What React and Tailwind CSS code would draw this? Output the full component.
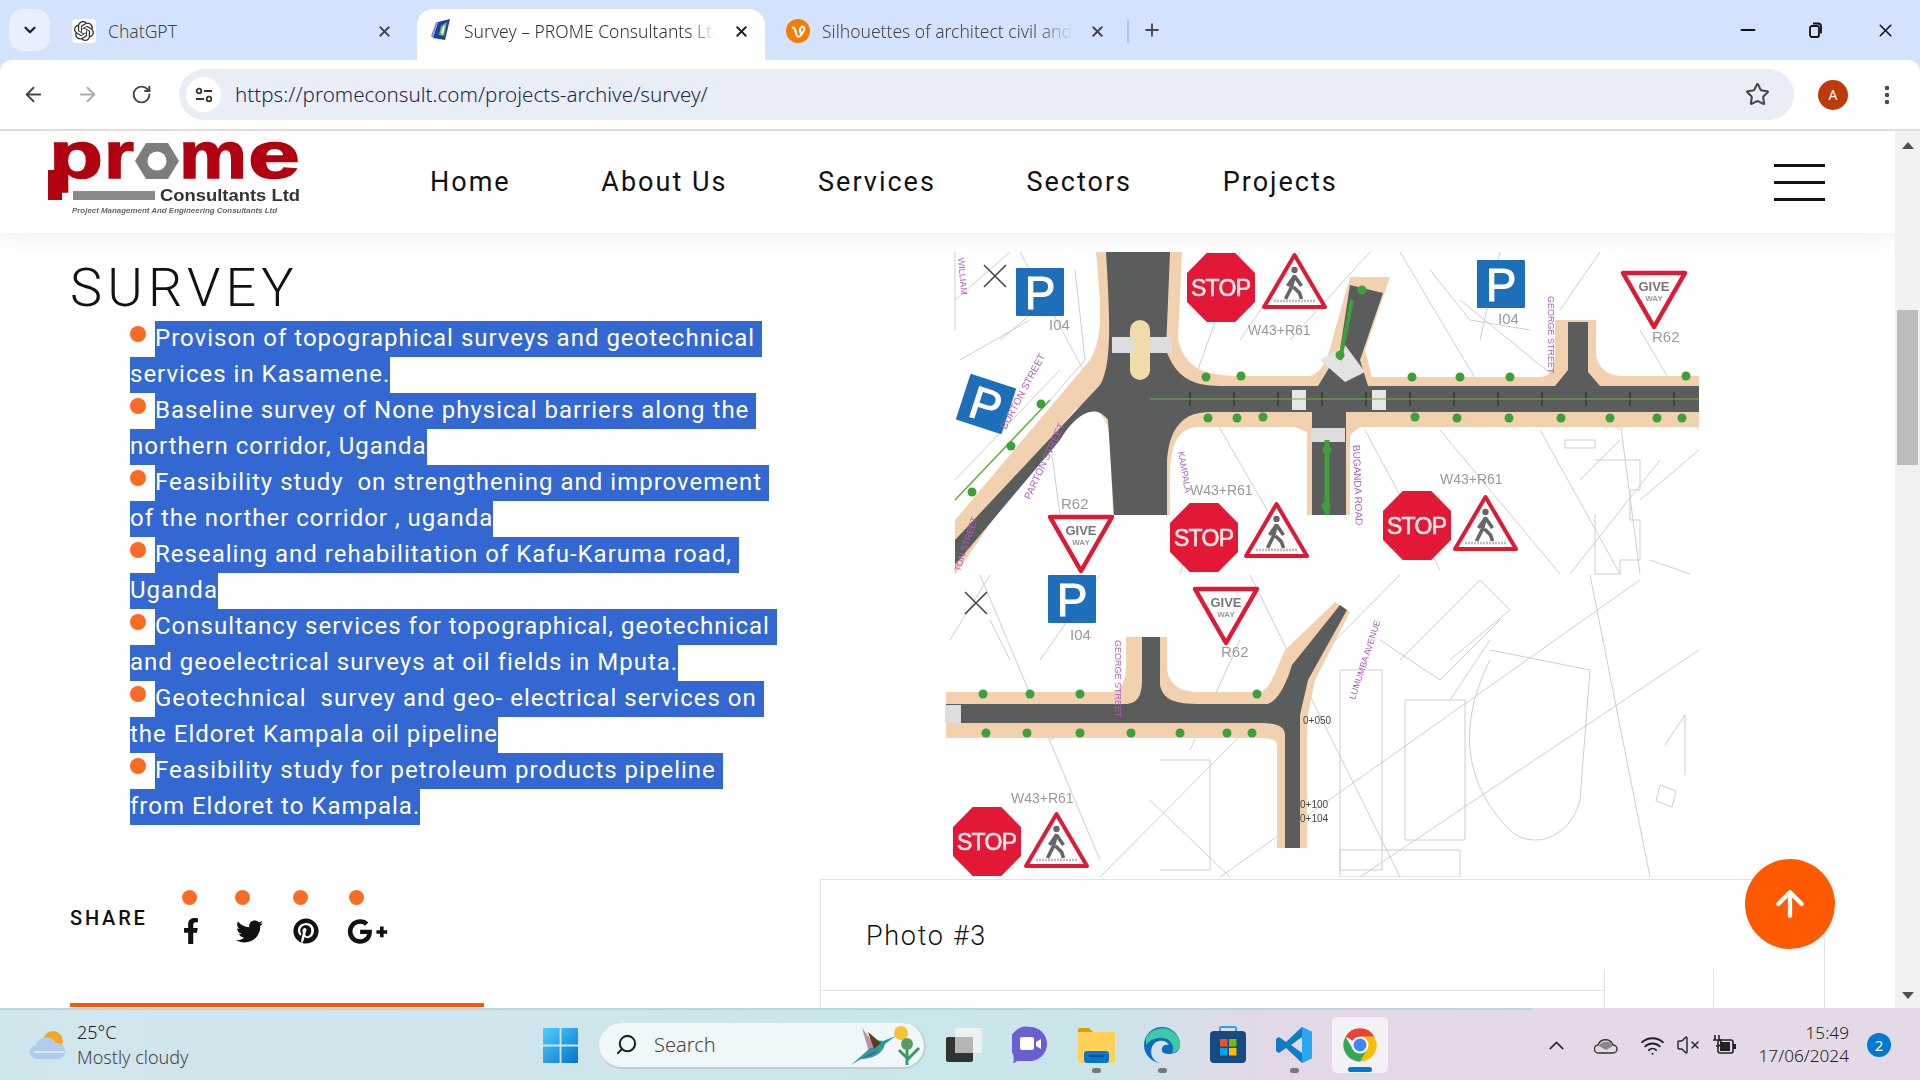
import React from "react";
import { FaFacebookF, FaTwitter, FaPinterest, FaGooglePlusG } from "react-icons/fa";
import { SiOpenai } from "react-icons/si";
import { ArrowLeft, ArrowRight, RotateCw, Star, Plus, X, ChevronDown, ChevronUp, Search, ArrowUp, EllipsisVertical, Minus, VolumeX, Wifi } from "lucide-react";

const lines = [
  ["Provison of topographical surveys and geotechnical ", "services in Kasamene."],
  ["Baseline survey of None physical barriers along the ", "northern corridor, Uganda"],
  ["Feasibility study  on strengthening and improvement ", "of the norther corridor , uganda"],
  ["Resealing and rehabilitation of Kafu-Karuma road, ", "Uganda"],
  ["Consultancy services for topographical, geotechnical ", "and geoelectrical surveys at oil fields in Mputa."],
  ["Geotechnical  survey and geo- electrical services on ", "the Eldoret Kampala oil pipeline"],
  ["Feasibility study for petroleum products pipeline ", "from Eldoret to Kampala."],
];

function Stop({ x, y, w = 68, h = 69 }) {
  const a = w * 0.29, b = h * 0.29;
  const pts = [[a, 0], [w - a, 0], [w, b], [w, h - b], [w - a, h], [a, h], [0, h - b], [0, b]].map((p) => `${x + p[0]},${y + p[1]}`).join(" ");
  return (
    <g>
      <polygon points={pts} fill="#e31837" />
      <text x={x + w / 2} y={y + h / 2 + 8} textAnchor="middle" fill="#fbe6e8" fontFamily="Liberation Sans" fontWeight="400" stroke="#fbe6e8" strokeWidth="0.6" fontSize="23" textLength={w - 8} lengthAdjust="spacing">STOP</text>
    </g>
  );
}
function Ped({ x, y, w = 65, h = 56 }) {
  const cx = x + w / 2;
  return (
    <g>
      <polygon points={`${cx},${y + 2} ${x + w - 2},${y + h - 2} ${x + 2},${y + h - 2}`} fill="#fff" stroke="#dc1c35" strokeWidth="4" strokeLinejoin="round" />
      <circle cx={cx} cy={y + 17} r="3.2" fill="#666" />
      <path d={`M${cx} ${y + 22} L${cx - 3} ${y + 34} L${cx - 9} ${y + 46} M${cx - 1} ${y + 34} L${cx + 5} ${y + 40} L${cx + 7} ${y + 46} M${cx} ${y + 23} L${cx - 7} ${y + 33} M${cx} ${y + 23} L${cx + 7} ${y + 33}`} stroke="#666" strokeWidth="3.6" fill="none" />
      <line x1={x + 12} x2={x + w - 12} y1={y + h - 8} y2={y + h - 8} stroke="#bbb" strokeWidth="2.5" strokeDasharray="2 1" />
    </g>
  );
}
function Give({ x, y, w = 66, h = 58 }) {
  const cx = x + w / 2;
  return (
    <g>
      <polygon points={`${x + 2},${y + 2} ${x + w - 2},${y + 2} ${cx},${y + h - 2}`} fill="#fff" stroke="#dc1c35" strokeWidth="4.5" strokeLinejoin="round" />
      <text x={cx} y={y + 20} textAnchor="middle" fill="#777" fontFamily="Liberation Sans" fontWeight="700" fontSize="13">GIVE</text>
      <text x={cx} y={y + 30} textAnchor="middle" fill="#999" fontFamily="Liberation Sans" fontWeight="700" fontSize="8">WAY</text>
    </g>
  );
}
function Park({ x, y, rot = 0 }) {
  return (
    <g transform={`rotate(${rot} ${x + 24} ${y + 24})`}>
      <rect x={x} y={y} width="48" height="48" rx="1" fill="#1c6fb8" />
      <text x={x + 24} y={y + 41} textAnchor="middle" fill="#fff" fontFamily="Liberation Sans" fontWeight="400" stroke="#fff" strokeWidth="1" fontSize="46">P</text>
    </g>
  );
}
function Dots({ pts }) {
  return pts.map((p, i) => <circle key={i} cx={p[0]} cy={p[1]} r="4.5" fill="#3f9f3a" />);
}
function Label({ x, y, t, rot, c = "#999", s = 13 }) {
  return <text x={x} y={y} fontSize={s} fill={c} fontFamily="Liberation Sans" transform={rot ? `rotate(${rot} ${x} ${y})` : undefined}>{t}</text>;
}
function Compass({ x, y }) {
  return <path d={`M${x - 11} ${y - 11}L${x + 11} ${y + 11}M${x + 11} ${y - 11}L${x - 11} ${y + 11}`} stroke="#444" strokeWidth="1.6" />;
}

const faint = [
  "M955 300L1010 252", "M1000 470L1100 380", "M955 480L1060 370", "M1020 252L1110 420", "M1240 252L1180 420", "M1400 252L1500 420", "M1370 252L1290 340",
  "M1460 300L1620 430", "M1500 252L1480 340", "M1600 252L1560 310", "M1640 330L1699 430", "M1440 430L1560 574", "M1540 430L1620 574", "M1640 500L1699 450",
  "M1620 420L1640 574", "M1660 460L1570 574", "M1215 420L1270 515", "M1365 430L1440 570", "M1200 515L1180 574", "M1050 440L1060 515", "M1650 560L1690 574",
  "M1565 440h30v8h-30z", "M1595 460h45v30h-10v30h10v40h-20v14h-25v-60", "M950 640L990 575", "M980 575L1100 860", "M1100 575L1040 660", "M1250 575L1400 877",
  "M1400 575L1100 877", "M1640 580L1220 877", "M1590 575L1650 877", "M1699 650L1360 877", "M1500 620L1440 680L1380 640", "M1490 640L1450 700", "M1340 670h42v200h-42z",
  "M1405 700h60v140h-60z", "M1490 660C1460 720 1460 780 1510 830C1530 850 1570 840 1580 800L1590 670L1490 650", "M1160 760h50v110h-50", "M1340 850h120v27h-120z", "M1665 745l20 -30v60", "M1660 785l16 6l-4 16l-16-6z",
  "M955 252V330", "M1075 270L1085 360L1050 400", "M1000 340L1060 290", "M960 360L1030 320", "M1430 270L1470 320L1530 330", "M1300 252L1240 340", "M1620 440L1580 480",
  "M1190 750L1240 640", "M1050 740L1120 700", "M990 620L1010 660", "M1150 800L1230 877", "M1400 660L1480 580L1510 610L1450 660",
];

const ticks = [];
for (let x = 1190; x < 1690; x += 44) ticks.push(`M${x} 392V406`);
for (let x = 975; x < 1270; x += 48) ticks.push(`M${x} 707V721`);

function MapDrawing() {
  return (
    <svg viewBox="945 252 755 625" width="755" height="625" className="block blur-[0.5px]">
      <rect x="945" y="252" width="755" height="625" fill="#fff" />
      {faint.map((d, i) => <path key={i} d={d} stroke="#c9d0d3" strokeWidth="1" fill="none" />)}
      <path d="M1096 252H1182L1178 340C1185 368 1205 376 1240 376H1310C1325 372 1330 350 1335 330L1350 277H1390L1365 350L1372 377H1540C1552 377 1555 365 1555 350V320H1596V355C1600 372 1610 376 1625 376H1699V427H1360L1350 435V515H1307V432L1295 427H1200C1180 427 1172 440 1170 470V515H1113L1110 440C1110 415 1090 400 1075 410C1040 450 1000 510 955 575V520L1090 360C1105 335 1100 300 1096 252Z" fill="#f2d1b0" />
      <path d="M1106 252H1170L1166 350C1175 375 1190 386 1220 386H1318L1340 350L1350 285L1383 293L1360 360L1368 386H1555L1568 370V322H1588V372L1600 386H1699V412H1346V515H1312V412H1210C1185 412 1170 425 1167 460V515H1114L1108 420C1095 402 1075 415 1060 440L955 565V540L1100 385C1112 365 1110 320 1106 252Z" fill="#5b5d5c" />
      {ticks.map((d, i) => <path key={i} d={d} stroke="#222" strokeWidth="1" />)}
      <rect x="1130" y="320" width="20" height="60" rx="10" fill="#efdca8" />
      <rect x="1112" y="337" width="22" height="16" fill="#ddd" />
      <rect x="1150" y="337" width="22" height="16" fill="#ddd" />
      <path d="M1320 360L1345 345L1365 372L1345 382Z" fill="#e3e3e3" />
      <rect x="1292" y="390" width="14" height="20" fill="#e6e6e6" />
      <rect x="1372" y="390" width="14" height="20" fill="#e6e6e6" />
      <rect x="1311" y="428" width="34" height="14" fill="#ddd" />
      <path d="M1150 399H1699" stroke="#7ea84a" strokeWidth="1" />
      <path d="M1352 300L1340 360" stroke="#3f9f3a" strokeWidth="4" />
      <path d="M1327 440V515" stroke="#3f9f3a" strokeWidth="5" />
      <path d="M955 500L1050 400" stroke="#5fb13c" strokeWidth="1.5" />
      <Dots pts={[[1206, 377], [1241, 376], [1412, 377], [1460, 377], [1510, 377], [1686, 376], [1208, 418], [1237, 418], [1263, 417], [1415, 417], [1457, 418], [1509, 418], [1561, 418], [1610, 418], [1657, 418], [1682, 418], [1041, 404], [1011, 446], [972, 492], [1340, 355], [1362, 290], [1327, 450], [1326, 506]]} />
      <path d="M946 692H1110C1122 692 1126 680 1126 665V637H1167V670C1170 685 1180 692 1200 692H1260C1270 690 1276 670 1285 650L1335 602L1350 612L1315 680L1307 720V848H1277V745C1277 740 1270 738 1260 738H946Z" fill="#f2d1b0" />
      <path d="M946 704H1125C1138 704 1142 695 1142 680V637H1160V685C1163 700 1175 704 1200 704H1268C1278 700 1286 685 1292 665L1340 605L1347 610L1308 680L1300 715V848H1285V735C1285 726 1276 723 1260 723H946Z" fill="#5b5d5c" />
      <rect x="945" y="705" width="16" height="18" fill="#ddd" />
      <Dots pts={[[983, 694], [1030, 694], [1080, 694], [1257, 694], [986, 733], [1027, 733], [1080, 733], [1131, 733], [1180, 733], [1227, 733], [1252, 733]]} />
      <Compass x={995} y={276} /><Compass x={976} y={603} />
      <Park x={1016} y={268} /><Park x={1477} y={260} /><Park x={962} y={380} rot={18} /><Park x={1048} y={575} />
      <Stop x={1187} y={253} /><Stop x={1170} y={503} /><Stop x={1383} y={491} /><Stop x={953} y={807} />
      <Ped x={1262} y={253} /><Ped x={1244} y={502} /><Ped x={1453} y={495} /><Ped x={1024} y={812} />
      <Give x={1621} y={271} /><Give x={1048} y={515} /><Give x={1193} y={587} />
      <Label x={1049} y={330} t="I04" s={15} /><Label x={1498} y={324} t="I04" s={15} /><Label x={1248} y={335} t="W43+R61" s={14} /><Label x={1190} y={495} t="W43+R61" s={14} />
      <Label x={1440} y={484} t="W43+R61" s={14} /><Label x={1652} y={342} t="R62" s={15} /><Label x={1061} y={509} t="R62" s={15} /><Label x={1221} y={657} t="R62" s={15} />
      <Label x={1011} y={803} t="W43+R61" s={14} /><Label x={1070} y={640} t="I04" s={15} />
      <Label x={1548} y={296} t="GEORGE STREET" rot={90} c="#b05ec0" s={9} /><Label x={1115} y={640} t="GEORGE STREET" rot={90} c="#b05ec0" s={9} />
      <Label x={1006} y={430} t="BURTON STREET" rot={-62} c="#b05ec0" s={10} /><Label x={1030} y={500} t="PARTON STREET" rot={-65} c="#b05ec0" s={10} />
      <Label x={1178} y={452} t="KAMPALA" rot={80} c="#b05ec0" s={9} /><Label x={1353} y={445} t="BUGANDA ROAD" rot={88} c="#b05ec0" s={10} />
      <Label x={1355} y={700} t="LUMUMBA AVENUE" rot={-72} c="#b05ec0" s={9} /><Label x={1300} y={808} t="0+100" c="#444" s={10} /><Label x={1300} y={822} t="0+104" c="#444" s={10} /><Label x={1303} y={724} t="0+050" c="#444" s={10} />
      <Label x={958} y={258} t="WILLIAM" rot={85} c="#b05ec0" s={9} /><Label x={960} y={572} t="TON STREET" rot={-72} c="#b05ec0" s={9} />
    </svg>
  );
}

function Logo() {
  return (
    <svg width="262" height="76" viewBox="45 140 262 76" className="block blur-[0.4px]">
      <g fill="#b1000f" fontFamily="Liberation Sans" fontWeight="700" stroke="#b1000f" strokeWidth="1.5">
        <text x="49" y="178" fontSize="67" textLength="54" lengthAdjust="spacingAndGlyphs">p</text>
        <text x="104" y="178" fontSize="67" textLength="30" lengthAdjust="spacingAndGlyphs">r</text>
        <text x="179" y="178" fontSize="67" textLength="68" lengthAdjust="spacingAndGlyphs">m</text>
        <text x="248" y="178" fontSize="67" textLength="52" lengthAdjust="spacingAndGlyphs">e</text>
      </g>
      <rect x="48" y="170" width="14" height="30" fill="#b1000f" />
      <polygon points="146,143 168,143 179,161 168,179 146,179 135,161" fill="#7d7d7d" />
      <circle cx="157" cy="161" r="9.5" fill="#fff" />
      <rect x="73" y="191" width="82" height="9" fill="#8a8a8a" />
      <text x="160" y="201" fontSize="16" fontWeight="700" fill="#333" fontFamily="Liberation Sans" textLength="140" lengthAdjust="spacingAndGlyphs">Consultants Ltd</text>
      <text x="72" y="213" fontSize="8" fontWeight="700" fontStyle="italic" fill="#666" fontFamily="Liberation Sans" textLength="205" lengthAdjust="spacingAndGlyphs">Project Management  And Engineering Consultants Ltd</text>
    </svg>
  );
}

function ChromeIcon({ s = 36 }) {
  return (
    <svg width={s} height={s} viewBox="0 0 48 48">
      <path d="M24 3a21 21 0 0 1 18.2 10.5H24a10.5 10.5 0 0 0-9.1 5.25L5.8 13.5A21 21 0 0 1 24 3z" fill="#ea4335" />
      <path d="M42.2 13.5A21 21 0 0 1 24 45l9.1-15.75A10.5 10.5 0 0 0 33.1 18.75 10.5 10.5 0 0 0 24 13.5z" fill="#fbbc04" />
      <path d="M24 45A21 21 0 0 1 5.8 13.5l9.1 15.75A10.5 10.5 0 0 0 33.1 29.25z" fill="#34a853" />
      <circle cx="24" cy="24" r="10.5" fill="#fff" /><circle cx="24" cy="24" r="8.2" fill="#4285f4" />
    </svg>
  );
}

export default function App() {
  return (
    <div className="w-[1920px] h-[1080px] flex flex-col overflow-hidden bg-white font-['Noto_Sans',sans-serif]">
      <div className="h-[60px] bg-[#d3e3fd] flex items-start shrink-0 text-[#444746] text-[17.5px]">
        <div className="ml-[9px] mt-[9px] w-[41px] h-[42px] rounded-[14px] bg-[#e9f0fd] flex items-center justify-center"><ChevronDown size={18} strokeWidth={3} color="#1f1f1f" /></div>
        <div className="w-[367px] h-[51px] mt-[9px] pb-[7px] flex items-center shrink-0">
          <div className="ml-[22px] w-[24px] h-[24px] rounded-[4px] bg-white flex items-center justify-center"><SiOpenai size={20} color="#333" /></div>
          <span className="ml-[12px] w-[268px] font-light">ChatGPT</span>
          <X size={17} strokeWidth={2.6} color="#444" />
        </div>
        <div className="w-[348px] h-[51px] mt-[9px] pb-[7px] bg-white rounded-t-[16px] flex items-center shrink-0 text-[#333]">
          <svg className="ml-[13px] shrink-0" width="22" height="24" viewBox="0 0 22 24"><path d="M8 3L20 0L15 21L3 19Z" fill="#1f3fa8" /><path d="M11 7L17 3L14 17L9 16Z" fill="#6fc24a" /><path d="M13 8L15 6L13 15L11 14Z" fill="#fff" /><path d="M3 19L8 3L6 3L1 17Z" fill="#7e95c9" /></svg>
          <span className="ml-[12px] w-[251px] whitespace-nowrap overflow-hidden font-light [mask-image:linear-gradient(to_right,black_90%,transparent)]">Survey – PROME Consultants Ltd</span>
          <X size={17} strokeWidth={2.8} color="#222" className="ml-[18px]" />
        </div>
        <div className="w-[362px] h-[51px] mt-[9px] pb-[7px] flex items-center shrink-0">
          <svg className="ml-[21px] shrink-0" width="24" height="24" viewBox="0 0 24 24"><circle cx="12" cy="12" r="12" fill="#f57c00" /><path d="M6 9c2-1 3 1 3.500 3S11 18 12 18c2 0 5-4 6-7s-1-4-2.500-3S13 12 15 14" fill="none" stroke="#fff" strokeWidth="2.200" /></svg>
          <span className="ml-[12px] w-[252px] shrink-0 whitespace-nowrap overflow-hidden font-light [mask-image:linear-gradient(to_right,black_85%,transparent)]">Silhouettes of architect civil and</span>
          <X size={17} strokeWidth={2.8} color="#444" className="ml-[15px] shrink-0" />
        </div>
        <div className="w-[2px] h-[24px] mt-[19px] bg-[#a8c7fa] shrink-0" />
        <Plus size={20} strokeWidth={2.2} color="#444" className="ml-[13px] mt-[20px] shrink-0" />
        <div className="flex-1" />
        <Minus size={22} strokeWidth={2.2} color="#111" className="mt-[19px]" />
        <svg className="ml-[49px] mt-[22px]" width="15" height="16" viewBox="0 0 15 16" fill="none" stroke="#111" strokeWidth="1.8"><rect x="2" y="4" width="9" height="11" rx="2" /><path d="M5 1.500h5a3 3 0 0 1 3 3v7" /></svg>
        <X size={21} strokeWidth={1.8} color="#111" className="ml-[52px] mt-[20px] mr-[24px]" />
      </div>
      <div className="h-[69px] shrink-0 bg-[#d3e3fd]">
        <div className="h-full bg-white rounded-t-[12px] flex items-center">
          <ArrowLeft size={23} strokeWidth={2} color="#444746" className="ml-[22px]" />
          <ArrowRight size={23} strokeWidth={2} color="#a9abad" className="ml-[31px]" />
          <RotateCw size={21} strokeWidth={2.2} color="#444746" className="ml-[32px]" />
          <div className="ml-[27px] w-[1615px] h-[51px] rounded-full bg-[#e9edf6] flex items-center">
            <div className="ml-[7px] w-[35px] h-[35px] rounded-full bg-white flex items-center justify-center">
              <svg width="18" height="16" viewBox="0 0 18 16" fill="none" stroke="#333" strokeWidth="1.8"><circle cx="4" cy="4" r="2.3" /><path d="M9 4h8M1 12h8" /><circle cx="14" cy="12" r="2.3" /></svg>
            </div>
            <span className="ml-[14px] text-[20.6px] font-light text-[#1f2a44]">https://promeconsult.com/projects-archive/survey/</span>
            <div className="flex-1" />
            <Star size={25} strokeWidth={2} color="#444746" className="mr-[24px]" />
          </div>
          <div className="ml-[24px] w-[30px] h-[30px] rounded-full bg-[#bc3a0c] text-white text-[14px] flex items-center justify-center">A</div>
          <EllipsisVertical size={24} strokeWidth={2.4} color="#444746" className="ml-[27px]" />
        </div>
      </div>
      <div className="h-[2px] bg-[#dfdfdf] shrink-0" />
      <div className="relative h-[877px] flex shrink-0">
        <div className="w-[1895px] h-full flex flex-col overflow-hidden font-['Roboto',sans-serif] text-[#111]">
          <header className="h-[102px] shrink-0 flex items-center bg-white shadow-[0_4px_24px_rgba(0,0,0,0.07)] relative z-10">
            <div className="ml-[45px] self-start mt-[9px]"><Logo /></div>
            <nav className="ml-[123px] flex gap-[90.7px] text-[27px] tracking-[2px] leading-none">
              <span>Home</span><span>About Us</span><span>Services</span><span>Sectors</span><span>Projects</span>
            </nav>
            <div className="flex-1" />
            <div className="mr-[70px] w-[51px] flex flex-col gap-[14px]">
              <div className="h-[3px] bg-[#111]" /><div className="h-[3px] bg-[#111]" /><div className="h-[3px] bg-[#111]" />
            </div>
          </header>
          <div className="flex flex-1 min-h-0">
            <div className="w-[820px] shrink-0 pl-[70px]">
              <h1 className="mt-[24px] mb-[2px] h-[62px] text-[54px] font-light tracking-[5.2px] leading-[62px]">SURVEY</h1>
              <ul className="pl-[60px] text-[24px] tracking-[1px] leading-[34px] text-white">
                {lines.map((l, i) => (
                  <li key={i}>
                    <div className="flex items-start h-[36px]">
                      <span className="mt-[5px] w-[16px] h-[16px] mr-[9px] rounded-full bg-[#f96a25] shrink-0" />
                      <span className="bg-[#3367d1] whitespace-pre h-[36px]">{l[0]}</span>
                    </div>
                    <div className="h-[36px] flex"><span className="bg-[#3367d1] whitespace-pre h-[36px]">{l[1]}</span></div>
                  </li>
                ))}
              </ul>
              <div className="mt-[65px] flex items-start">
                <span className="mt-[16px] w-[111px] text-[20px] font-medium tracking-[2.8px] leading-[24px] text-[#111]">SHARE</span>
                <div className="flex flex-col">
                  <div className="flex">
                    <span className="ml-[1px] w-[15px] h-[15px] rounded-full bg-[#f96a25]" />
                    <span className="ml-[38px] w-[15px] h-[15px] rounded-full bg-[#f96a25]" />
                    <span className="ml-[43px] w-[15px] h-[15px] rounded-full bg-[#f96a25]" />
                    <span className="ml-[41px] w-[15px] h-[15px] rounded-full bg-[#f96a25]" />
                  </div>
                  <div className="mt-[12px] flex items-center h-[28px]">
                    <FaFacebookF size={26} color="#111" className="ml-[-3px]" />
                    <FaTwitter size={27} color="#111" className="ml-[32px]" />
                    <FaPinterest size={26} color="#111" className="ml-[30px]" />
                    <FaGooglePlusG size={41} color="#111" className="ml-[28px]" />
                  </div>
                </div>
              </div>
              <div className="mt-[58px] w-[414px] h-[4px] bg-[#ff5400]" />
            </div>
            <div className="flex-1 min-w-0 flex flex-col">
              <div className="mt-[19px] ml-[125px] shrink-0"><MapDrawing /></div>
              <div className="mt-[2px] w-[1005px] h-[129px] border-t border-l border-r border-[#e2e2e2] shrink-0 flex flex-col">
                <div className="h-[89px] pl-[45px] flex items-center text-[27px] tracking-[1.7px] font-light leading-none pt-[24px]">Photo #3</div>
                <div className="flex h-[39px]">
                  <div className="w-[783px] h-[22px] border-b border-[#e2e2e2]" />
                  <div className="w-[109px] border-l border-[#e2e2e2]" />
                  <div className="w-[110px] border-l border-[#e2e2e2]" />
                </div>
              </div>
            </div>
          </div>
        </div>
        <div className="w-[25px] h-full bg-[#f1f1f1] flex flex-col items-center shrink-0 relative z-20">
          <div className="mt-[11px] w-0 h-0 border-l-[6px] border-r-[6px] border-b-[7px] border-l-transparent border-r-transparent border-b-[#505050]" />
          <div className="mt-[161px] w-[21px] h-[155px] bg-[#bcbcbc]" />
          <div className="flex-1" />
          <div className="mb-[9px] w-0 h-0 border-l-[6px] border-r-[6px] border-t-[7px] border-l-transparent border-r-transparent border-t-[#505050]" />
        </div>
        <div className="absolute left-[1745px] top-[728px] z-30 w-[90px] h-[90px] rounded-full bg-[#ff5a00] flex items-center justify-center">
          <ArrowUp size={40} strokeWidth={2.6} color="#fff" />
        </div>
      </div>
      <div className="h-[72px] shrink-0 flex flex-col bg-[linear-gradient(90deg,#d0e6ed_0%,#d2e4ec_20%,#c9e7eb_45%,#cbe5e9_58%,#e3d8e5_66%,#e4d9e6_100%)]">
        <div className="h-[2px] w-[1532px] bg-[#bdd4d9]" />
        <div className="flex-1 flex items-center">
          <svg className="ml-[28px] shrink-0" width="38" height="34" viewBox="0 0 38 34">
            <circle cx="25" cy="13" r="10" fill="#f5a623" />
            <path d="M9 31a7 7 0 0 1-1-14 11 11 0 0 1 20-2 8 8 0 0 1 2 16z" fill="#b3ccee" />
            <path d="M6 24h30" stroke="#d6e4f7" strokeWidth="2" />
          </svg>
          <div className="ml-[11px] w-[120px] flex flex-col text-[18px] leading-[25px] font-light -mt-[1px]">
            <span className="text-[#222]">25°C</span><span className="text-[#444]">Mostly cloudy</span>
          </div>
          <svg className="ml-[346px] shrink-0" width="35" height="35" viewBox="0 0 35 35">
            <defs><linearGradient id="w" x1="0" y1="0" x2="1" y2="1"><stop offset="0" stopColor="#4fd0fb" /><stop offset="1" stopColor="#0572cf" /></linearGradient></defs>
            <path d="M0 1a1 1 0 0 1 1-1h15.600v16.600H0zM18.400 0H34a1 1 0 0 1 1 1v15.600H18.400zM0 18.400h16.600V35H1a1 1 0 0 1-1-1zM18.400 18.400H35V34a1 1 0 0 1-1 1H18.400z" fill="url(#w)" />
          </svg>
          <div className="ml-[21px] w-[327px] h-[46px] mt-[1px] rounded-full bg-[#eff7f9] border-b-2 border-r-2 border-[#bed0d3] flex items-center shrink-0">
            <Search size={23} strokeWidth={2.2} color="#222" className="ml-[16px] -scale-x-100 shrink-0" />
            <span className="ml-[16px] text-[20px] font-light text-[#444] w-[196px] shrink-0">Search</span>
            <svg className="shrink-0" width="74" height="42" viewBox="0 0 74 42">
              <path d="M1 41L18 26C20 18 27 15 33 17L46 12L35 20C33 30 22 35 11 35Z" fill="#2a9d9d" />
              <path d="M8 36L24 30L28 26Z" fill="#5a4fb0" />
              <path d="M12 4L26 22L18 25Z" fill="#bb93a8" /><path d="M18 8L31 19L24 25Z" fill="#5d3a1a" />
              <circle cx="51" cy="9" r="7" fill="#f4c430" />
              <path d="M57 41V24M57 34L49 26M57 36L69 24" stroke="#3a9a6a" strokeWidth="3" fill="none" /><circle cx="57" cy="20" r="6" fill="#5a9a6a" />
            </svg>
          </div>
          <div className="ml-[5px] flex shrink-0">
            <div className="relative w-[66px] h-[56px] flex items-center justify-center">
              <svg width="36" height="36" viewBox="0 0 36 36"><rect x="0" y="10" width="27" height="25" rx="2" fill="#333" /><rect x="9" y="1" width="27" height="25" rx="2" fill="#f2f2f2" opacity="0.85" /><rect x="9" y="10" width="18" height="16" fill="#b5b5b5" /></svg>
            </div>
            <div className="relative w-[66px] h-[56px] flex items-center justify-center">
              <svg width="36" height="38" viewBox="0 0 36 38"><path d="M18 1a17 17 0 0 1 0 34H5c-2 2-3 2-4 2 1-2 1-5 0-9A17 17 0 0 1 18 1z" fill="#6a5fd0" /><rect x="8" y="11" width="14" height="13" rx="2" fill="#fff" /><path d="M24 16l5-3v10l-5-3z" fill="#fff" /></svg>
            </div>
            <div className="relative w-[66px] h-[56px] flex items-center justify-center">
              <svg width="37" height="35" viewBox="0 0 37 35"><path d="M0 2a2 2 0 0 1 2-2h9l4 4h-15z" fill="#d9a000" /><path d="M0 4h37v29a2 2 0 0 1-2 2H2a2 2 0 0 1-2-2z" fill="#ffd257" /><rect x="6" y="23" width="25" height="12" rx="3" fill="#0a74c9" /><rect x="11" y="27" width="15" height="2" fill="#064c85" /></svg>
              <span className="absolute bottom-[0px] left-[29px] w-[9px] h-[5px] rounded-full bg-[#777]" />
            </div>
            <div className="relative w-[66px] h-[56px] flex items-center justify-center">
              <svg width="36" height="36" viewBox="0 0 36 36"><path d="M18 0a18 18 0 0 1 18 18c0 7-6 9-12 9-5 0-7-3-6-6 1-3 4-4 7-3-3-6-14-6-17 2C5 28 10 36 18 36A18 18 0 0 1 18 0z" fill="#0f6cbd" /><path d="M2 11A18 18 0 0 1 36 18c0 5-4 7-8 8 3-5 0-14-9-15C12 10 6 13 2 18z" fill="#3dc8a8" /></svg>
              <span className="absolute bottom-[0px] left-[29px] w-[9px] h-[5px] rounded-full bg-[#777]" />
            </div>
            <div className="relative w-[66px] h-[56px] flex items-center justify-center">
              <svg width="36" height="38" viewBox="0 0 36 38"><path d="M10 5V2a1 1 0 0 1 1-1h14a1 1 0 0 1 1 1v3" fill="none" stroke="#28a8ea" strokeWidth="2" /><rect x="0" y="5" width="36" height="32" rx="4" fill="#164a80" /><rect x="10" y="13" width="7.500" height="7.500" fill="#f25022" /><rect x="19" y="13" width="7.500" height="7.500" fill="#7fba00" /><rect x="10" y="22" width="7.500" height="7.500" fill="#00a4ef" /><rect x="19" y="22" width="7.500" height="7.500" fill="#ffb900" /></svg>
            </div>
            <div className="relative w-[66px] h-[56px] flex items-center justify-center">
              <svg width="36" height="38" viewBox="0 0 36 38"><path d="M26 1L36 6V32L26 37L10 22L3 27L0 25V13L3 11L10 16ZM26 11L15 19L26 27Z" fill="#0c7cc4" /><path d="M26 1L36 6V32L26 37Z" fill="#26a9f2" /></svg>
              <span className="absolute bottom-[0px] left-[29px] w-[9px] h-[5px] rounded-full bg-[#777]" />
            </div>
            <div className="relative w-[66px] h-[56px] flex items-center justify-center">
              <div className="w-[56px] h-[56px] rounded-[5px] bg-[#f4f1f6] flex items-center justify-center"><ChromeIcon s={38} /></div>
              <span className="absolute bottom-[1px] left-[21px] w-[24px] h-[5px] rounded-full bg-[#0078d4]" />
            </div>
          </div>
          <div className="flex-1" />
          <ChevronUp size={25} strokeWidth={1.4} color="#222" />
          <svg className="ml-[25px]" width="24" height="18" viewBox="0 0 24 18"><path d="M5 17a4 4 0 0 1-1-8 8 8 0 0 1 15 0 4 4 0 0 1 0 8z" fill="#ddd" stroke="#333" strokeWidth="1.4" /><path d="M5 10a8 8 0 0 1 14 0L12 14z" fill="#888" /></svg>
          <Wifi size={25} strokeWidth={1.9} color="#222" className="ml-[22px]" />
          <VolumeX size={24} strokeWidth={1.4} color="#222" className="ml-[11px]" />
          <svg className="ml-[12px]" width="25" height="22" viewBox="0 0 25 22" fill="none"><rect x="6" y="6" width="15" height="13" rx="2" stroke="#222" strokeWidth="1.6" /><rect x="8" y="8" width="10" height="9" fill="#222" /><rect x="21" y="10" width="3" height="5" fill="#222" /><path d="M3 1v5M7 1v5M1 6h8v3a3 3 0 0 1-3 3h-2" stroke="#222" strokeWidth="1.6" /></svg>
          <div className="ml-[22px] w-[90px] -mt-[2px] flex flex-col items-end text-[17.2px] leading-[23px] text-[#222] font-light whitespace-nowrap">
            <span>15:49</span><span>17/06/2024</span>
          </div>
          <div className="ml-[18px] mr-[29px] w-[24px] h-[24px] rounded-full bg-[#0078d4] text-white text-[15px] flex items-center justify-center">2</div>
        </div>
      </div>
    </div>
  );
}
